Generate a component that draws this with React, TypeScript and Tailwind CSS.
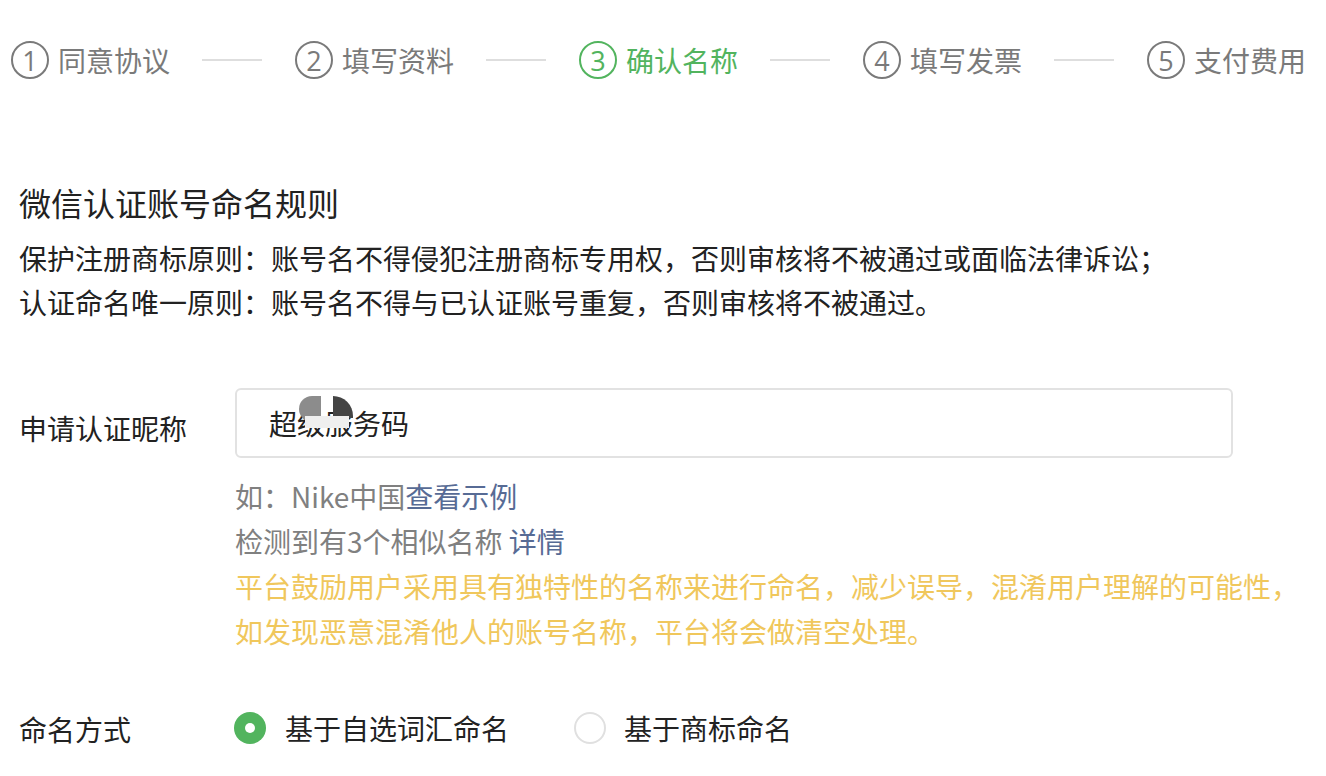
import React from "react";

const steps = [
  { no: "1", label: "同意协议" },
  { no: "2", label: "填写资料" },
  { no: "3", label: "确认名称", active: true },
  { no: "4", label: "填写发票" },
  { no: "5", label: "支付费用" },
];

const font = {
  fontFamily: '"Noto Sans CJK SC", "Noto Sans", sans-serif',
};

function Step({ no, label, active }: { no: string; label: string; active?: boolean }) {
  return (
    <div
      className={`flex items-center gap-[9px] ${active ? "text-[#52b45e]" : "text-[#7a7a7a]"}`}
    >
      <div
        className={`flex h-[38px] w-[38px] items-center justify-center rounded-full border-2 text-[27px] font-normal leading-none ${
          active ? "border-[#52b45e]" : "border-[#7a7a7a]"
        }`}
        style={{ fontFamily: '"Open Sans", "Noto Sans", sans-serif' }}
      >
        {no}
      </div>
      <span className="text-[28px] leading-[44px]">{label}</span>
    </div>
  );
}

export default function App() {
  return (
    <div className="min-h-screen w-[1326px] bg-white text-[#222]" style={font}>
      {/* steps */}
      <div className="flex items-center pl-[11px] pt-[38px]">
        {steps.map((s, i) => (
          <React.Fragment key={s.no}>
            {i > 0 && <div className="ml-[32px] mr-[33px] h-[2px] w-[60px] bg-[#dedede]" />}
            <Step {...s} />
          </React.Fragment>
        ))}
      </div>

      <div className="pl-[19px]">
        <h2 className="mt-[98px] text-[32px] font-normal leading-[44px]">微信认证账号命名规则</h2>
        <div className="mt-[12px] text-[28px] leading-[44px] text-[#222]">
          <p>保护注册商标原则：账号名不得侵犯注册商标专用权，否则审核将不被通过或面临法律诉讼；</p>
          <p>认证命名唯一原则：账号名不得与已认证账号重复，否则审核将不被通过。</p>
        </div>

        {/* nickname */}
        <div className="mt-[64px] flex">
          <div className="flex h-[70px] w-[216px] shrink-0 items-center pt-[10px] text-[28px]">
            申请认证昵称
          </div>
          <div className="flex flex-col">
            <div className="flex h-[70px] w-[998px] items-center rounded-[6px] border-2 border-[#e2e2e2] pl-[32px] text-[28px]">
              <span>超</span>
              <span className="relative">
                级服
                <span className="absolute left-[2px] top-[-6px] h-[26px] w-[22px] rounded-l-full rounded-tr-[6px] bg-[#8c8c8c]" />
                <span className="absolute left-[36px] top-[-6px] h-[22px] w-[20px] rounded-tr-full bg-[#444]" />
                <span className="absolute left-[8px] top-[14px] h-[12px] w-[44px] bg-[#efefef]" />
              </span>
              <span>务码</span>
            </div>
            <div className="mt-[16px] w-[1080px] text-[28px] leading-[45px] text-[#808080]">
              <p>
                如：Nike中国<span className="text-[#576b95]">查看示例</span>
              </p>
              <p>
                检测到有3个相似名称 <span className="text-[#576b95]">详情</span>
              </p>
              <p className="text-[#f0c75c]">
                平台鼓励用户采用具有独特性的名称来进行命名，减少误导，混淆用户理解的可能性，
                <br />
                如发现恶意混淆他人的账号名称，平台将会做清空处理。
              </p>
            </div>
          </div>
        </div>

        {/* naming method */}
        <div className="mt-[52px] flex h-[44px] items-center text-[28px]">
          <div className="w-[215px] shrink-0 pt-[2px]">命名方式</div>
          <label className="flex items-center gap-[19px]">
            <span className="flex h-[32px] w-[32px] items-center justify-center rounded-full bg-[#52b45e]">
              <span className="h-[10px] w-[10px] rounded-full bg-white" />
            </span>
            <span>基于自选词汇命名</span>
          </label>
          <label className="ml-[65px] flex items-center gap-[18px]">
            <span className="h-[32px] w-[32px] rounded-full border-2 border-[#e0e0e0]" />
            <span>基于商标命名</span>
          </label>
        </div>
      </div>
    </div>
  );
}
